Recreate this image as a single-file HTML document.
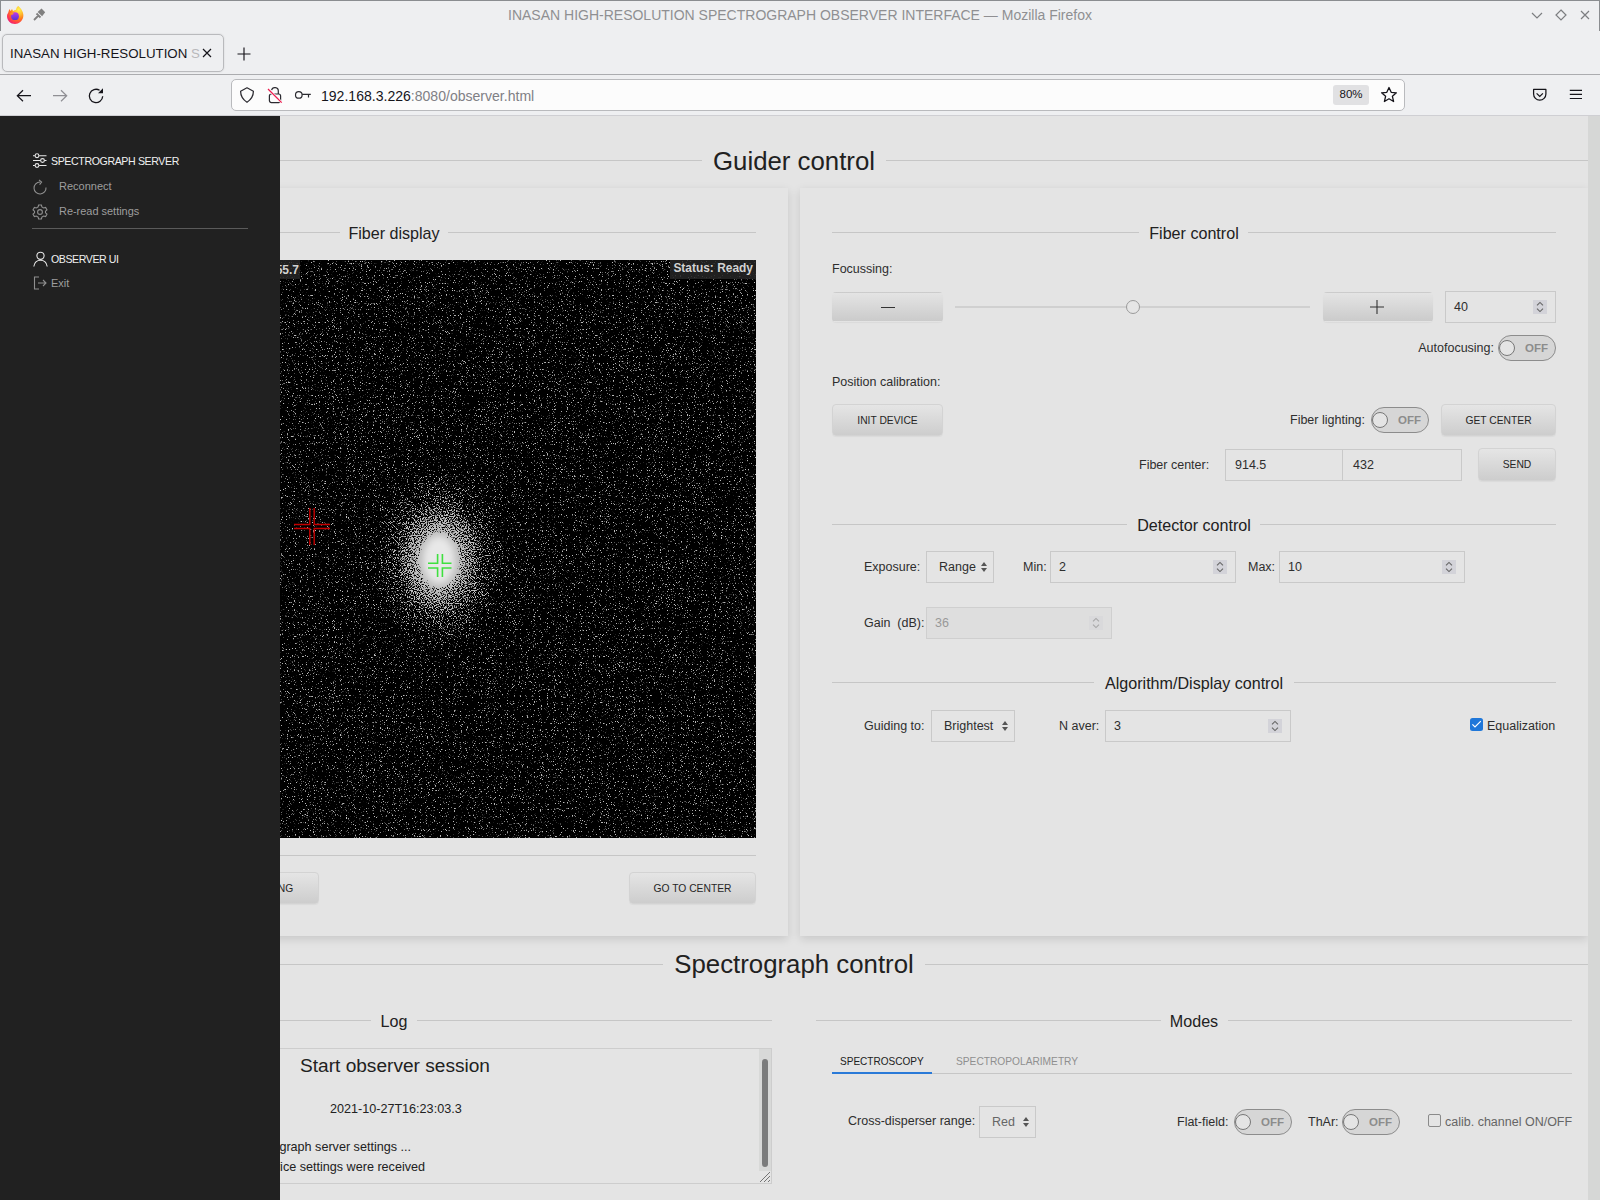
<!DOCTYPE html>
<html><head><meta charset="utf-8">
<style>
*{box-sizing:border-box;margin:0;padding:0}
html,body{width:1600px;height:1200px;overflow:hidden;font-family:"Liberation Sans",sans-serif;background:#e4e4e4}
.a{position:absolute}
#chrome{position:absolute;left:0;top:0;width:1600px;height:116px;background:#eeeff1}
.t{position:absolute;white-space:nowrap;line-height:1}
svg{position:absolute;overflow:visible}
.hl{position:absolute;height:1px;background:#c6c6c6}
.card{position:absolute;background:#e4e4e4;box-shadow:0 3px 9px rgba(0,0,0,0.13)}
.st{text-align:center;font-size:16.1px;color:#212121}
.btn{position:absolute;border:1px solid #d3d3d3;border-radius:4px;background:linear-gradient(#e5e5e5,#cdcdcd);font-size:10.3px;color:#262626;text-align:center;display:flex;align-items:center;justify-content:center;white-space:nowrap;box-shadow:0 1px 1px rgba(0,0,0,0.04)}
.inp{position:absolute;border:1px solid #c9c9c9;background:#e4e4e4}
.v{color:#5a5a5a}
.spin{position:absolute;width:14px;height:14px;background:#d3d3d9}
.tog{position:absolute;width:58px;height:26px;border:1px solid #8c8c8c;border-radius:13px;background:#d6d6d6}
.tog i{position:absolute;left:0;top:4px;width:16px;height:16px;border-radius:50%;border:1px solid #777;background:#e4e4e4}
.tog b{position:absolute;left:26px;top:7px;font-size:11.5px;font-weight:bold;color:#8c8c8c;line-height:1}
.sel{position:absolute;width:6px;height:10px;margin-top:1px}
.sel:before{content:"";position:absolute;left:0;top:0;border-left:3px solid transparent;border-right:3px solid transparent;border-bottom:4px solid #555}
.sel:after{content:"";position:absolute;left:0;top:6px;border-left:3px solid transparent;border-right:3px solid transparent;border-top:4px solid #555}
.l{position:absolute;white-space:nowrap;line-height:1;font-size:12.5px;color:#2e2e2e}

</style></head><body>
<div id="chrome">
  <div class="a" style="left:0;top:0;width:1600px;height:1px;background:#8a8d90"></div>
  <div class="a" style="left:0;top:0;width:1px;height:31px;background:#8a8d90"></div>
  <div class="a" style="left:1599px;top:0;width:1px;height:31px;background:#8a8d90"></div>
  <div class="t" style="left:0;width:1600px;text-align:center;top:8px;font-size:14px;color:#8f8f92">INASAN HIGH-RESOLUTION SPECTROGRAPH OBSERVER INTERFACE — Mozilla Firefox</div>
  <!-- firefox logo -->
  <svg style="left:5px;top:5px" width="20" height="20" viewBox="0 0 20 20">
    <defs><radialGradient id="ff" cx="0.72" cy="0.2" r="0.95"><stop offset="0" stop-color="#fff44f"/><stop offset="0.3" stop-color="#ffbd2e"/><stop offset="0.55" stop-color="#ff7a1a"/><stop offset="0.8" stop-color="#ff3750"/><stop offset="1" stop-color="#e31587"/></radialGradient>
    <linearGradient id="fg" x1="0" y1="0" x2="0" y2="1"><stop offset="0" stop-color="#c239e8"/><stop offset="1" stop-color="#5536d8"/></linearGradient></defs>
    <path d="M3.2 7.8 L4.3 3.9 L5.6 6 L7 4.1 L8.2 6.2 C9 5.3 10 4.9 11 4.8 C11.2 3 12.5 1.4 13.2 1 C14.8 2.3 16.4 4 17.2 6 C18.3 8 18.6 10 18.2 12 C17.4 16 14 19 10 19 C5.5 19 2 15.5 2 11 C2 9.8 2.4 8.7 3.2 7.8 Z" fill="url(#ff)"/>
    <circle cx="10" cy="11.2" r="3.9" fill="url(#fg)"/>
    <path d="M4.5 9.3 C5.5 8 7.5 7.6 9 8.6 L7.3 9.8 C6.3 9.6 5.2 9.6 4.5 9.3 Z" fill="#ff9a1e"/>
  </svg>
  <svg style="left:33px;top:9px" width="12" height="12" viewBox="0 0 12 12"><path d="M1 11 L5 7 M3.5 4.5 L7.5 8.5 M6 3 L8.5 0.8 L11 3.3 L9 6 Z" stroke="#808080" stroke-width="1.8" fill="#808080"/></svg>
  <!-- window controls -->
  <svg style="left:1531px;top:12px" width="12" height="7" viewBox="0 0 12 7"><path d="M1 1 L6 6 L11 1" stroke="#7c7e81" stroke-width="1.2" fill="none"/></svg>
  <svg style="left:1555px;top:9px" width="12" height="12" viewBox="0 0 12 12"><path d="M6 1 L11 6 L6 11 L1 6 Z" stroke="#7c7e81" stroke-width="1.2" fill="none"/></svg>
  <svg style="left:1580px;top:10px" width="10" height="10" viewBox="0 0 10 10"><path d="M1 1 L9 9 M9 1 L1 9" stroke="#7c7e81" stroke-width="1.2" fill="none"/></svg>
  <!-- tab -->
  <div class="a" style="left:2px;top:34px;width:222px;height:38px;border:1px solid #b9babd;border-radius:5px;background:#eeeff1;box-shadow:0 0 2px rgba(0,0,0,0.12)"></div>
  <div class="t" style="left:10px;top:46.5px;font-size:13.3px;color:#15141a">INASAN HIGH-RESOLUTION <span style="color:#b8b8bb">S</span></div>
  <svg style="left:202px;top:48px" width="10" height="10" viewBox="0 0 10 10"><path d="M1 1 L9 9 M9 1 L1 9" stroke="#15141a" stroke-width="1.2" fill="none"/></svg>
  <svg style="left:237px;top:46.5px" width="14" height="14" viewBox="0 0 14 14"><path d="M7 0.5 V13.5 M0.5 7 H13.5" stroke="#15141a" stroke-width="1.15" fill="none"/></svg>
  <div class="a" style="left:0;top:74px;width:1600px;height:1px;background:#abacaf"></div>
  <!-- nav -->
  <svg style="left:16px;top:89px" width="16" height="14" viewBox="0 0 16 14"><path d="M15 6.7 H1.5 M7 1.2 L1.3 6.7 L7 12.3" stroke="#15141a" stroke-width="1.2" fill="none"/></svg>
  <svg style="left:52px;top:89px" width="16" height="14" viewBox="0 0 16 14"><path d="M1 6.7 H14.5 M9 1.2 L14.7 6.7 L9 12.3" stroke="#8f8f94" stroke-width="1.2" fill="none"/></svg>
  <svg style="left:88px;top:88px" width="16" height="16" viewBox="0 0 16 16"><path d="M14.7 8.3 A6.7 6.7 0 1 1 11.6 2.3" stroke="#15141a" stroke-width="1.3" fill="none"/><path d="M10 5.3 L15 5.3 L15 0.3 Z" fill="#15141a"/></svg>
  <div class="a" style="left:231px;top:79px;width:1174px;height:32px;background:#fcfcfc;border:1px solid #b9babd;border-radius:5px"></div>
  <svg style="left:239px;top:87px" width="16" height="16" viewBox="0 0 16 16"><path d="M8 0.8 L14.4 4.3 C14.4 9.5 11.8 12.8 8 15.3 C4.2 12.8 1.6 9.5 1.6 4.3 Z" stroke="#2b2a30" stroke-width="1.25" fill="none" stroke-linejoin="round"/></svg>
  <svg style="left:266px;top:85px" width="18" height="20" viewBox="0 0 18 20"><rect x="3.4" y="9" width="11.2" height="8.6" rx="2" stroke="#2b2a30" stroke-width="1.2" fill="none"/><path d="M5.6 5.2 A3.4 3.4 0 0 1 12.3 6.2 V9" stroke="#2b2a30" stroke-width="1.2" fill="none"/><path d="M2 4 L15.7 17.6" stroke="#fcfcfc" stroke-width="2.6"/><path d="M2 4 L15.7 17.6" stroke="#ee1d4f" stroke-width="1.3"/></svg>
  <svg style="left:294px;top:89px" width="18" height="10" viewBox="0 0 18 10"><circle cx="4.8" cy="5.9" r="3.3" stroke="#2b2a30" stroke-width="1.2" fill="none"/><path d="M8.1 5.4 H16.8 M14.5 5.4 V8.6" stroke="#2b2a30" stroke-width="1.2" fill="none"/></svg>
  <div class="t" style="left:321px;top:88.5px;font-size:14.05px;color:#15141a">192.168.3.226<span style="color:#808085">:8080/observer.html</span></div>
  <div class="a" style="left:1333px;top:85px;width:36px;height:20px;background:#e1e1e3;border-radius:3px"></div>
  <div class="t" style="left:1333px;width:36px;text-align:center;top:89px;font-size:11.5px;color:#15141a">80%</div>
  <svg style="left:1380px;top:86px" width="18" height="18" viewBox="0 0 18 18"><path d="M9 1.5 L11.2 6.3 L16.4 6.8 L12.4 10.3 L13.6 15.5 L9 12.8 L4.4 15.5 L5.6 10.3 L1.6 6.8 L6.8 6.3 Z" stroke="#15141a" stroke-width="1.3" fill="none" stroke-linejoin="round"/></svg>
  <svg style="left:1532px;top:88px" width="16" height="14" viewBox="0 0 16 14"><path d="M1.6 1.4 H13.9 V6 A6.15 6.15 0 0 1 1.6 6 Z" stroke="#15141a" stroke-width="1.25" fill="none" stroke-linejoin="round"/><path d="M4.6 5.4 L7.75 8.4 L10.9 5.4" stroke="#15141a" stroke-width="1.25" fill="none"/></svg>
  <svg style="left:1569px;top:89px" width="14" height="12" viewBox="0 0 14 12"><path d="M0.8 1.3 H13 M0.8 5.4 H13 M0.8 9.5 H13" stroke="#15141a" stroke-width="1.2" fill="none"/></svg>
  <div class="a" style="left:0;top:115px;width:1600px;height:1px;background:#cfcfd3"></div>
</div>
<div id="page" class="a" style="left:0;top:116px;width:1600px;height:1084px;background:#e4e4e4;overflow:hidden">
</div>
<div id="pc" class="a" style="left:0;top:0;width:1600px;height:1200px">
  <!-- Guider control header -->
  <div class="hl" style="left:0;top:160px;width:702px"></div>
  <div class="hl" style="left:886px;top:160px;width:702px"></div>
  <div class="t" style="left:600px;width:388px;text-align:center;top:148.5px;font-size:25.8px;color:#212121">Guider control</div>
  <!-- left card -->
  <div class="card" style="left:0;top:188px;width:788px;height:748px"></div>
  <div class="card" style="left:800px;top:188px;width:788px;height:748px"></div>
  <!-- Fiber display header -->
  <div class="hl" style="left:32px;top:232px;width:308px"></div>
  <div class="hl" style="left:448px;top:232px;width:308px"></div>
  <div class="t st" style="left:294px;width:200px;top:225px">Fiber display</div>
  <!-- fiber image -->
  <svg style="left:178px;top:260px" width="578" height="578" viewBox="0 0 578 578">
    <defs>
      <radialGradient id="blob" cx="261" cy="300" r="92" gradientUnits="userSpaceOnUse" gradientTransform="translate(261 300) scale(0.74 1) translate(-261 -300)">
        <stop offset="0" stop-color="#fff"/>
        <stop offset="0.2" stop-color="#fff"/>
        <stop offset="0.31" stop-color="#505050"/>
        <stop offset="0.62" stop-color="#1c1c1c"/>
        <stop offset="1" stop-color="#000"/>
      </radialGradient>
      <filter id="nz" x="0" y="0" width="100%" height="100%" color-interpolation-filters="sRGB">
        <feTurbulence type="fractalNoise" baseFrequency="0.85" numOctaves="2" seed="7" result="n"/>
        <feColorMatrix in="n" type="matrix" values="1 0 0 0 0  1 0 0 0 0  1 0 0 0 0  0 0 0 0 1" result="g"/>
        <feComposite in="SourceGraphic" in2="g" operator="arithmetic" k1="0" k2="0.9" k3="1" k4="0" result="s"/>
        <feColorMatrix in="s" type="matrix" values="0 0 0 0 0.74  0 0 0 0 0.74  0 0 0 0 0.74  8 0 0 0 -5.0"/>
      </filter>
    </defs>
    <rect width="578" height="578" fill="#000"/>
    <rect width="578" height="578" fill="url(#blob)" filter="url(#nz)"/>
    <filter id="bl" x="-50%" y="-50%" width="200%" height="200%"><feGaussianBlur stdDeviation="3.5"/></filter>
    <ellipse cx="261" cy="300" rx="16" ry="24" fill="#e8e8e8" filter="url(#bl)"/>
  </svg>
</div>
<div id="pc2" class="a" style="left:0;top:0;width:1600px;height:1200px">
  <!-- crosses -->
  <svg style="left:0;top:0" width="1600" height="1200">
    <path d="M294 524.5 H309.8 V508 M330 524.5 H314.2 V508 M294 528.5 H309.8 V545 M330 528.5 H314.2 V545" stroke="#c40000" stroke-width="1.4" fill="none"/>
    <path d="M428 563.3 H437.6 V554 M451.5 563.3 H442.4 V554 M428 568 H437.6 V577 M451.5 568 H442.4 V577" stroke="#3fe03f" stroke-width="1.6" fill="none"/>
  </svg>
  <!-- overlays -->
  <div class="a" style="left:178px;top:260px;width:122px;height:19px;background:rgba(38,38,38,0.85)"></div>
  <div class="t" style="left:178px;width:121px;text-align:right;top:263.5px;font-size:12px;font-weight:bold;color:#d2d2d2">Exp: 55.7</div>
  <div class="a" style="left:670px;top:260px;width:86px;height:19px;background:rgba(38,38,38,0.85)"></div>
  <div class="t" style="left:670px;width:83px;text-align:right;top:262.5px;font-size:11.95px;font-weight:bold;color:#d2d2d2">Status: Ready</div>
  <div class="hl" style="left:32px;top:855px;width:724px"></div>
  <div class="btn" style="left:188px;top:872px;width:131px;height:32px">START GUIDING</div>
  <div class="btn" style="left:629px;top:872px;width:127px;height:32px">GO TO CENTER</div>

  <!-- RIGHT CARD: Fiber control -->
  <div class="hl" style="left:832px;top:232px;width:307px"></div>
  <div class="hl" style="left:1248px;top:232px;width:308px"></div>
  <div class="t st" style="left:1094px;width:200px;top:225px">Fiber control</div>
  <div class="l" style="left:832px;top:263px">Focussing:</div>
  <div class="btn" style="left:832px;top:292px;width:111px;height:30px;border-color:transparent;background:linear-gradient(#e4e4e4,#cbcbcb)"><span style="display:inline-block;width:14px;height:1px;background:#333;vertical-align:middle;margin-top:1px"></span></div>
  <div class="a" style="left:955px;top:306px;width:355px;height:2px;background:#d0d0d0"></div>
  <div class="a" style="left:1126px;top:300px;width:14px;height:14px;border-radius:50%;border:1px solid #9a9a9a;background:#e5e5e5"></div>
  <div class="btn" style="left:1323px;top:292px;width:110px;height:30px;border-color:transparent;background:linear-gradient(#e4e4e4,#cbcbcb)"></div>
  <svg style="left:1370px;top:300px" width="14" height="14" viewBox="0 0 14 14"><path d="M7 0 V14 M0 7 H14" stroke="#333" stroke-width="1.1"/></svg>
  <div class="inp" style="left:1445px;top:291px;width:111px;height:32px"></div>
  <div class="l v" style="left:1454px;top:301px">40</div>
  <div class="spin" style="left:1533px;top:300px"><svg width="14" height="14" viewBox="0 0 14 14" style="left:0;top:0"><path d="M4 5.3 L7 2.4 L10 5.3 M4 8.7 L7 11.6 L10 8.7" stroke="#666" stroke-width="1.1" fill="none"/></svg></div>
  <div class="l" style="left:1394px;width:100px;top:342px;text-align:right">Autofocusing:</div>
  <div class="tog" style="left:1498px;top:335px"><i></i><b>OFF</b></div>

  <div class="l" style="left:832px;top:376px">Position calibration:</div>
  <div class="btn" style="left:832px;top:404px;width:111px;height:32px">INIT DEVICE</div>
  <div class="l" style="left:1290px;top:414px">Fiber lighting:</div>
  <div class="tog" style="left:1371px;top:407px"><i></i><b>OFF</b></div>
  <div class="btn" style="left:1441px;top:404px;width:115px;height:32px">GET CENTER</div>
  <div class="l" style="left:1139px;top:459px">Fiber center:</div>
  <div class="inp" style="left:1225px;top:449px;width:118px;height:32px"></div>
  <div class="inp" style="left:1342px;top:449px;width:120px;height:32px"></div>
  <div class="l v" style="left:1235px;top:459px">914.5</div>
  <div class="l v" style="left:1353px;top:459px">432</div>
  <div class="btn" style="left:1478px;top:448px;width:78px;height:33px">SEND</div>
</div>
<div id="pc3" class="a" style="left:0;top:0;width:1600px;height:1200px">
  <!-- Detector control -->
  <div class="hl" style="left:832px;top:524px;width:295px"></div>
  <div class="hl" style="left:1260px;top:524px;width:296px"></div>
  <div class="t st" style="left:1094px;width:200px;top:517px">Detector control</div>
  <div class="l" style="left:864px;top:561px">Exposure:</div>
  <div class="inp" style="left:926px;top:551px;width:68px;height:32px"></div>
  <div class="l" style="left:939px;top:561px">Range</div>
  <div class="sel" style="left:981px;top:561px"></div>
  <div class="l" style="left:1023px;top:561px">Min:</div>
  <div class="inp" style="left:1050px;top:551px;width:186px;height:32px"></div>
  <div class="l v" style="left:1059px;top:561px">2</div>
  <div class="spin" style="left:1213px;top:560px"><svg width="14" height="14" viewBox="0 0 14 14" style="left:0;top:0"><path d="M4 5.3 L7 2.4 L10 5.3 M4 8.7 L7 11.6 L10 8.7" stroke="#666" stroke-width="1.1" fill="none"/></svg></div>
  <div class="l" style="left:1248px;top:561px">Max:</div>
  <div class="inp" style="left:1279px;top:551px;width:186px;height:32px"></div>
  <div class="l v" style="left:1288px;top:561px">10</div>
  <div class="spin" style="left:1442px;top:560px"><svg width="14" height="14" viewBox="0 0 14 14" style="left:0;top:0"><path d="M4 5.3 L7 2.4 L10 5.3 M4 8.7 L7 11.6 L10 8.7" stroke="#666" stroke-width="1.1" fill="none"/></svg></div>
  <div class="l" style="left:864px;top:617px">Gain&nbsp; (dB):</div>
  <div class="inp" style="left:926px;top:607px;width:186px;height:32px;background:#dedede;border-color:#cfcfcf"></div>
  <div class="l" style="left:935px;top:617px;color:#999">36</div>
  <div class="spin" style="left:1089px;top:616px;opacity:0.45"><svg width="14" height="14" viewBox="0 0 14 14" style="left:0;top:0"><path d="M4 5.3 L7 2.4 L10 5.3 M4 8.7 L7 11.6 L10 8.7" stroke="#666" stroke-width="1.1" fill="none"/></svg></div>

  <!-- Algorithm/Display control -->
  <div class="hl" style="left:832px;top:682px;width:262px"></div>
  <div class="hl" style="left:1294px;top:682px;width:262px"></div>
  <div class="t st" style="left:1044px;width:300px;top:675px">Algorithm/Display control</div>
  <div class="l" style="left:864px;top:720px">Guiding to:</div>
  <div class="inp" style="left:931px;top:710px;width:84px;height:32px"></div>
  <div class="l" style="left:944px;top:720px">Brightest</div>
  <div class="sel" style="left:1002px;top:720px"></div>
  <div class="l" style="left:1059px;top:720px">N aver:</div>
  <div class="inp" style="left:1105px;top:710px;width:186px;height:32px"></div>
  <div class="l v" style="left:1114px;top:720px">3</div>
  <div class="spin" style="left:1268px;top:719px"><svg width="14" height="14" viewBox="0 0 14 14" style="left:0;top:0"><path d="M4 5.3 L7 2.4 L10 5.3 M4 8.7 L7 11.6 L10 8.7" stroke="#666" stroke-width="1.1" fill="none"/></svg></div>
  <div class="a" style="left:1470px;top:718px;width:13px;height:13px;border-radius:2.5px;background:#1f77d9"></div>
  <svg style="left:1470px;top:718px" width="13" height="13" viewBox="0 0 13 13"><path d="M2.4 6.4 L5 9 L10.8 3.2" stroke="#fff" stroke-width="1.2" fill="none"/></svg>
  <div class="l" style="left:1487px;top:720px">Equalization</div>

  <!-- Spectrograph control -->
  <div class="hl" style="left:0;top:964px;width:663px"></div>
  <div class="hl" style="left:925px;top:964px;width:663px"></div>
  <div class="t" style="left:594px;width:400px;text-align:center;top:952px;font-size:25.8px;color:#212121">Spectrograph control</div>

  <!-- Log -->
  <div class="hl" style="left:16px;top:1020px;width:355px"></div>
  <div class="hl" style="left:417px;top:1020px;width:355px"></div>
  <div class="t st" style="left:294px;width:200px;top:1013px">Log</div>
  <div class="a" style="left:16px;top:1048px;width:756px;height:136px;border:1px solid #cdcdcd;background:#e4e4e4"></div>
  <div class="t" style="left:300px;top:1056px;font-size:19.1px;color:#212121">Start observer session</div>
  <div class="t" style="left:330px;top:1103px;font-size:12.6px;color:#212121">2021-10-27T16:23:03.3</div>
  <div class="t" style="left:411px;top:1140.5px;font-size:12.6px;color:#212121;transform:translateX(-100%)">Reading spectrograph server settings ...</div>
  <div class="t" style="left:425px;top:1160.5px;font-size:12.6px;color:#212121;transform:translateX(-100%)">Device settings were received</div>
  <div class="a" style="left:759px;top:1049px;width:12px;height:122px;background:#d8d9d8"></div>
  <div class="a" style="left:762px;top:1059px;width:6px;height:108px;border-radius:3px;background:#7b7c7c"></div>
  <svg style="left:759px;top:1171px" width="12" height="12" viewBox="0 0 12 12"><path d="M11 1 L1 11 M11 5 L5 11 M11 9 L9 11" stroke="#666" stroke-width="0.9"/></svg>

  <!-- Modes -->
  <div class="hl" style="left:816px;top:1020px;width:345px"></div>
  <div class="hl" style="left:1228px;top:1020px;width:344px"></div>
  <div class="t st" style="left:1094px;width:200px;top:1013px">Modes</div>
  <div class="t" style="left:840px;top:1056.5px;font-size:10.05px;color:#212121">SPECTROSCOPY</div>
  <div class="t" style="left:956px;top:1056.5px;font-size:10.2px;color:#8f8f8f">SPECTROPOLARIMETRY</div>
  <div class="hl" style="left:832px;top:1073px;width:740px"></div>
  <div class="a" style="left:832px;top:1072px;width:100px;height:2px;background:#2a7ad8"></div>
  <div class="l" style="left:848px;top:1115px">Cross-disperser range:</div>
  <div class="inp" style="left:979px;top:1106px;width:57px;height:32px"></div>
  <div class="l" style="left:992px;top:1116px;color:#666">Red</div>
  <div class="sel" style="left:1023px;top:1116px"></div>
  <div class="l" style="left:1177px;top:1116px">Flat-field:</div>
  <div class="tog" style="left:1234px;top:1109px"><i></i><b>OFF</b></div>
  <div class="l" style="left:1308px;top:1116px">ThAr:</div>
  <div class="tog" style="left:1342px;top:1109px"><i></i><b>OFF</b></div>
  <div class="a" style="left:1428px;top:1114px;width:13px;height:13px;border:1px solid #8a8a8a;border-radius:2px"></div>
  <div class="l" style="left:1445px;top:1116px;color:#666">calib. channel ON/OFF</div>
</div>
  <div class="a" style="left:1588px;top:116px;width:12px;height:1084px;background:#d6d7d6"></div>
<div id="side" class="a" style="left:0;top:116px;width:280px;height:1084px;background:#212121"></div>
<div class="a" style="left:0;top:0;width:280px;height:1200px">
  <svg style="left:32px;top:153px" width="15" height="15" viewBox="0 0 15 15" fill="none" stroke="#e8e8e8" stroke-width="1.1">
    <path d="M1 2.7 H2.9 M7.1 2.7 H14.5 M1 7.5 H8.4 M12.6 7.5 H14.5 M1 12.5 H2.9 M7.1 12.5 H14.5"/>
    <circle cx="5" cy="2.7" r="1.9"/><circle cx="10.5" cy="7.5" r="1.9"/><circle cx="5" cy="12.5" r="1.9"/>
  </svg>
  <div class="t" style="left:51px;top:155.5px;font-size:10.6px;letter-spacing:-0.38px;color:#f0f0f0">SPECTROGRAPH SERVER</div>
  <svg style="left:33px;top:180px" width="14" height="14" viewBox="0 0 14 14" fill="none" stroke="#8f8f8f" stroke-width="1.1">
    <path d="M7 2 A6 6 0 1 0 13 7.5"/><path d="M6 0 L8.6 2 L6.6 4.6"/>
  </svg>
  <div class="t" style="left:59px;top:181px;font-size:11px;color:#9e9e9e">Reconnect</div>
  <svg style="left:32px;top:204px" width="16" height="16" viewBox="0 0 16 16" fill="none" stroke="#8f8f8f" stroke-width="1.1">
    <path d="M6.6 1 H9.4 L9.9 3 L11.6 4 L13.6 3.4 L15 5.8 L13.5 7.2 V8.8 L15 10.2 L13.6 12.6 L11.6 12 L9.9 13 L9.4 15 H6.6 L6.1 13 L4.4 12 L2.4 12.6 L1 10.2 L2.5 8.8 V7.2 L1 5.8 L2.4 3.4 L4.4 4 L6.1 3 Z"/><circle cx="8" cy="8" r="2.4"/>
  </svg>
  <div class="t" style="left:59px;top:206px;font-size:10.95px;color:#9e9e9e">Re-read settings</div>
  <div class="a" style="left:32px;top:228px;width:216px;height:1px;background:#5a5a5a"></div>
  <svg style="left:33px;top:251px" width="15" height="16" viewBox="0 0 15 16" fill="none" stroke="#e8e8e8" stroke-width="1.1">
    <circle cx="7.5" cy="4.8" r="3.6"/><path d="M0.8 15.5 C1.5 11 4 9.3 7.5 9.3 C11 9.3 13.5 11 14.2 15.5"/>
  </svg>
  <div class="t" style="left:51px;top:253.5px;font-size:10.6px;letter-spacing:-0.42px;color:#f0f0f0">OBSERVER UI</div>
  <svg style="left:33px;top:276px" width="14" height="14" viewBox="0 0 14 14" fill="none" stroke="#8f8f8f" stroke-width="1.1">
    <path d="M6 1 H1.5 V13 H6 M5 7 H13 M10 4 L13 7 L10 10"/>
  </svg>
  <div class="t" style="left:51px;top:278px;font-size:11px;color:#9e9e9e">Exit</div>
</div>
</body></html>
